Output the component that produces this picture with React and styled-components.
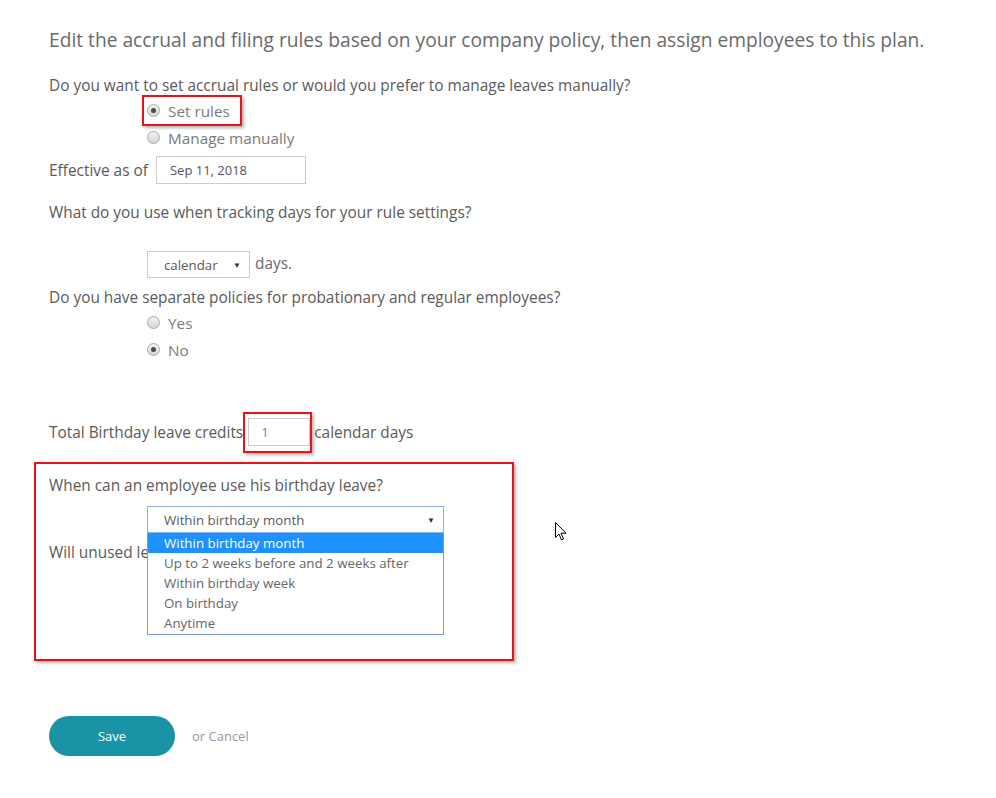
import styled, { createGlobalStyle } from 'styled-components';

const GlobalStyle = createGlobalStyle`
  html, body {
    margin: 0;
    padding: 0;
    background: #ffffff;
  }
  body {
    font-family: "Open Sans", "Liberation Sans", sans-serif;
    color: #555555;
  }
`;

const Page = styled.div`
  position: relative;
  width: 996px;
  height: 798px;
  padding: 26px 0 0 49px;
  box-sizing: border-box;
  overflow: hidden;
`;

const Heading = styled.h1`
  margin: 0;
  font-size: 19.2px;
  font-weight: 400;
  line-height: 28px;
  color: #6a6a6a;
`;

const Question = styled.div`
  font-size: 15.4px;
  line-height: 22px;
  color: #5a5a5a;
  white-space: nowrap;
  margin-top: ${(p) => p.$top || 0}px;
`;

const ClippedQuestion = styled(Question)`
  width: 98px;
  overflow: hidden;
`;

const RadioGroup = styled.div`
  display: flex;
  flex-direction: column;
  padding-left: ${(p) => p.$indent || 98}px;
`;

const RadioRow = styled.label`
  display: flex;
  align-items: center;
  height: 27px;
  gap: 8px;
  font-size: 15.3px;
  color: #7a7a7a;
`;

const Highlight = styled.span`
  display: inline-flex;
  align-items: center;
  border: 2px solid #e8141c;
  box-shadow: 2px 2px 3px rgba(0, 0, 0, 0.3);
  padding: ${(p) => p.$pad || '0 10px 0 3px'};
`;

const RadioDot = styled.span`
  width: 11px;
  height: 11px;
  border-radius: 50%;
  border: 1px solid #a9a9a9;
  background: linear-gradient(#f2f2f2, #d6d6d6);
  display: inline-flex;
  align-items: center;
  justify-content: center;
  flex-shrink: 0;
  &::after {
    content: '';
    width: 5px;
    height: 5px;
    border-radius: 50%;
    background: ${(p) => (p.$checked ? '#4a4a4a' : 'transparent')};
  }
`;

const InlineRow = styled.div`
  display: flex;
  align-items: center;
  gap: ${(p) => p.$gap || 0}px;
  font-size: 15.4px;
  color: #5a5a5a;
  margin-top: ${(p) => p.$top || 0}px;
  padding-left: ${(p) => p.$indent || 0}px;
`;

const TextBox = styled.div`
  width: ${(p) => p.$w}px;
  height: 28px;
  box-sizing: border-box;
  border: 1px solid #cccccc;
  font-size: 13px;
  color: ${(p) => p.$color || '#555555'};
  display: flex;
  align-items: center;
  padding-left: ${(p) => p.$pl || 13}px;
`;

const SelectBox = styled.div`
  position: relative;
  width: ${(p) => p.$w}px;
  height: 27px;
  box-sizing: border-box;
  border: 1px solid ${(p) => (p.$focus ? '#8ab0e6' : '#cccccc')};
  font-size: 13.3px;
  color: #5a5a5a;
  display: flex;
  align-items: center;
  justify-content: space-between;
  padding: 0 8px 0 16px;
`;

const Arrow = styled.span`
  font-size: 8px;
  color: #333333;
`;

const DaysText = styled.span`
  font-size: 15.4px;
  color: #6a6a6a;
  margin-top: -2px;
`;

const Unit = styled.span`
  margin-left: 2px;
`;

const PolicyBox = styled.div`
  width: 480px;
  height: 199px;
  box-sizing: border-box;
  margin: 9px 0 0 -15px;
  border: 2px solid #e8141c;
  box-shadow: 2px 2px 3px rgba(0, 0, 0, 0.3);
  padding: 11px 0 0 13px;
`;

const SelectWrap = styled.div`
  position: relative;
  margin: 9px 0 0 98px;
  width: 297px;
`;

const OptionList = styled.ul`
  position: absolute;
  top: 27px;
  left: 0;
  width: 297px;
  box-sizing: border-box;
  margin: 0;
  padding: 0 0 1px;
  list-style: none;
  background: #ffffff;
  border: 1px solid #7f9bd6;
  border-top: none;
  z-index: 5;
`;

const OptionItem = styled.li`
  height: 20px;
  line-height: 20px;
  font-size: 13.3px;
  padding-left: 16px;
  color: ${(p) => (p.$active ? '#ffffff' : '#666666')};
  background: ${(p) => (p.$active ? '#1e90ff' : 'transparent')};
`;

const Actions = styled.div`
  display: flex;
  align-items: center;
  gap: 17px;
  margin-top: 55px;
`;

const SaveButton = styled.button`
  width: 126px;
  height: 40px;
  border: none;
  border-radius: 20px;
  background: #1993a6;
  color: #ffffff;
  font-family: "Open Sans", "Liberation Sans", sans-serif;
  font-size: 13px;
  cursor: pointer;
`;

const CancelLink = styled.span`
  font-size: 13px;
  color: #999999;
`;

const Cursor = styled.svg`
  position: absolute;
  left: 555px;
  top: 522px;
`;

const Radio = ({ checked, children }) => (
  <RadioRow>
    <RadioDot $checked={checked} />
    {children}
  </RadioRow>
);

const options = [
  'Within birthday month',
  'Up to 2 weeks before and 2 weeks after',
  'Within birthday week',
  'On birthday',
  'Anytime',
];

export default function App() {
  return (
    <Page>
      <GlobalStyle />
      <Heading>
        Edit the accrual and filing rules based on your company policy, then assign employees to this plan.
      </Heading>

      <Question $top={21}>Do you want to set accrual rules or would you prefer to manage leaves manually?</Question>
      <RadioGroup $indent={93}>
        <RadioRow>
          <Highlight>
            <RadioRow as="span">
              <RadioDot $checked />
              Set rules
            </RadioRow>
          </Highlight>
        </RadioRow>
      </RadioGroup>
      <RadioGroup>
        <Radio>Manage manually</Radio>
      </RadioGroup>

      <InlineRow $top={5} $gap={8}>
        Effective as of
        <TextBox $w={150}>Sep 11, 2018</TextBox>
      </InlineRow>

      <Question $top={18}>What do you use when tracking days for your rule settings?</Question>
      <InlineRow $top={27} $indent={98} $gap={5}>
        <SelectBox $w={103}>
          calendar
          <Arrow>▼</Arrow>
        </SelectBox>
        <DaysText>days.</DaysText>
      </InlineRow>

      <Question $top={9}>Do you have separate policies for probationary and regular employees?</Question>
      <RadioGroup>
        <Radio>Yes</Radio>
        <Radio checked>No</Radio>
      </RadioGroup>

      <InlineRow $top={49}>
        Total Birthday leave credits
        <Highlight $pad="4px 0 5px 3px">
          <TextBox $w={62} $pl={12} $color="#6f86b0">1</TextBox>
        </Highlight>
        <Unit>calendar days</Unit>
      </InlineRow>

      <PolicyBox>
        <Question>When can an employee use his birthday leave?</Question>
        <SelectWrap>
          <SelectBox $w={297} $focus>
            Within birthday month
            <Arrow>▼</Arrow>
          </SelectBox>
          <OptionList>
            {options.map((o, i) => (
              <OptionItem key={o} $active={i === 0}>
                {o}
              </OptionItem>
            ))}
          </OptionList>
        </SelectWrap>
        <ClippedQuestion $top={9}>Will unused leave credits be converted to cash?</ClippedQuestion>
      </PolicyBox>

      <Actions>
        <SaveButton>Save</SaveButton>
        <CancelLink>or Cancel</CancelLink>
      </Actions>

      <Cursor width="12" height="20" viewBox="0 0 12 20">
        <path
          d="M0.5 0.5 L0.5 15.5 L4 12 L6.5 18 L8.5 17 L6 11.2 L11 11.2 Z"
          fill="#ffffff"
          stroke="#000000"
          strokeWidth="1"
        />
      </Cursor>
    </Page>
  );
}
